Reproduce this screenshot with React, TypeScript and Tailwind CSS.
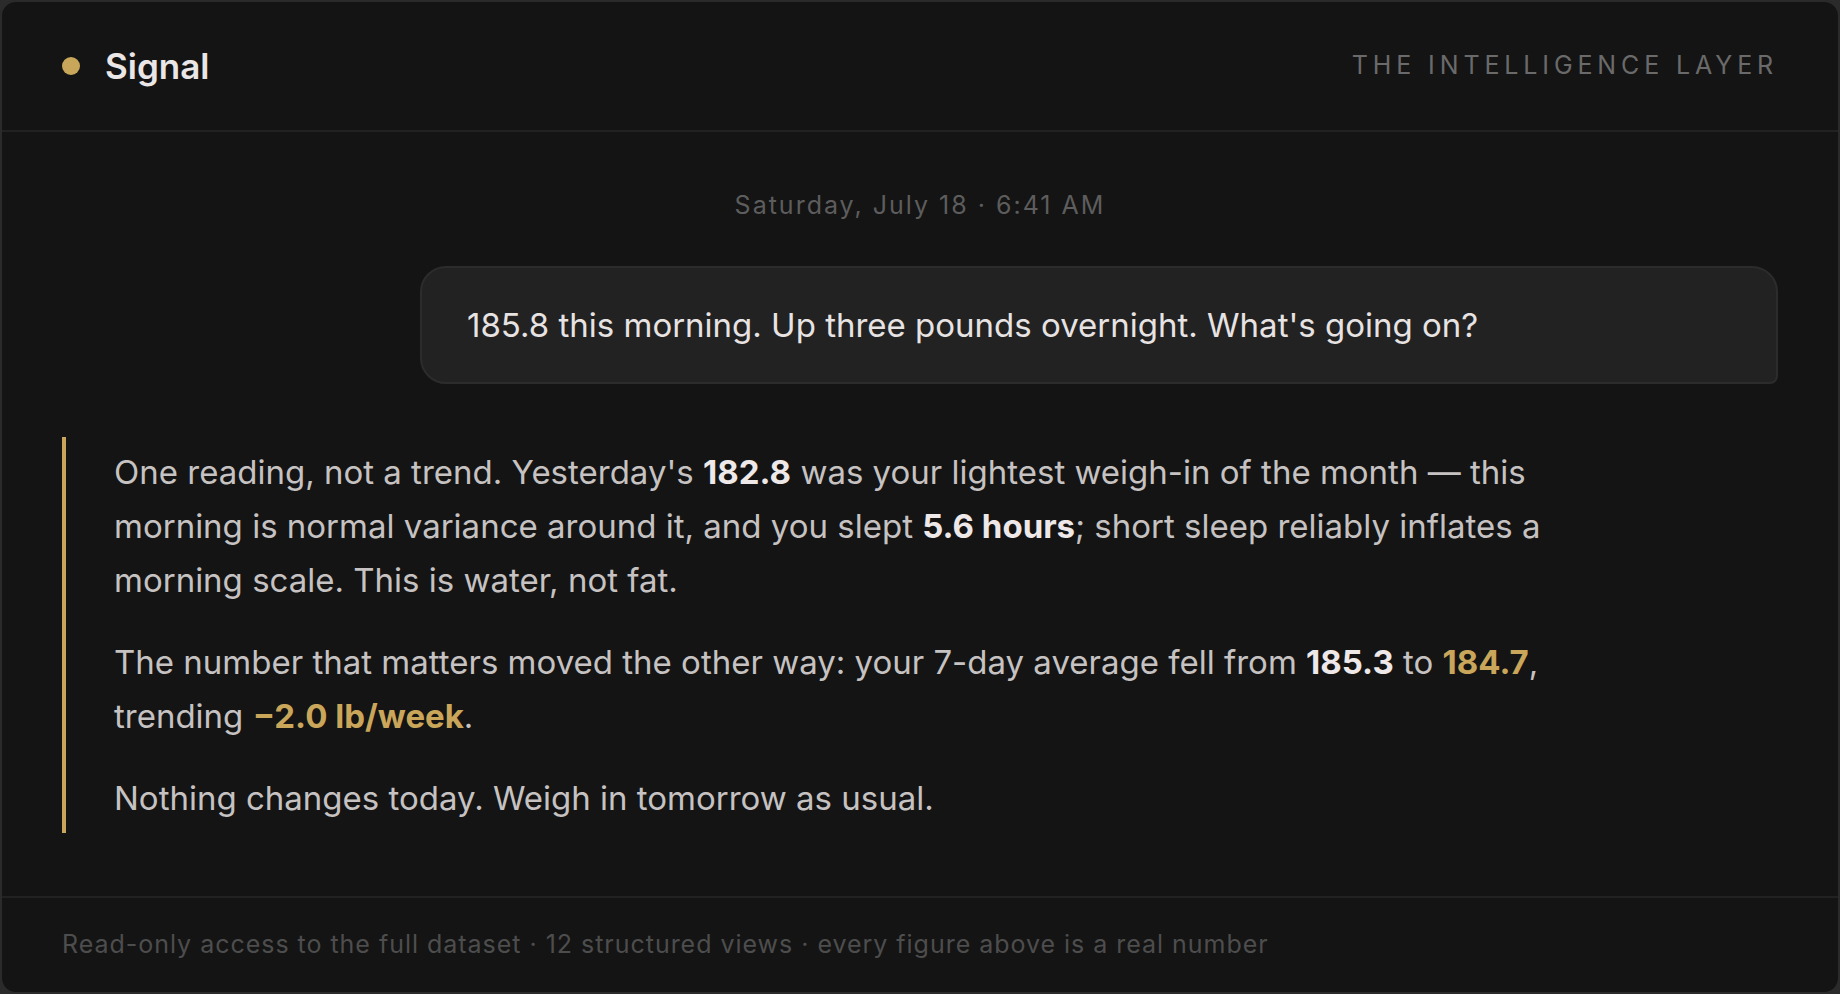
const bold = "font-bold text-[#eee8e8]";
const gold = "font-bold text-[#c9a65a]";

export default function App() {
  return (
    <div className="h-screen w-full bg-[#2b2b2b] font-['Inter',sans-serif]">
      <div className="flex h-full flex-col overflow-hidden rounded-[16px] border-2 border-[#2b2b2b] bg-[#141414]">
        {/* top bar */}
        <header className="flex h-[130px] shrink-0 items-center justify-between border-b-2 border-[#222222] px-[60px]">
          <div className="flex items-center gap-[25px]">
            <span className="h-[18px] w-[18px] rounded-full bg-[#c8a75a]" />
            <span className="text-[35px] font-semibold leading-none text-[#ebe6e6]">Signal</span>
          </div>
          <span className="text-[25px] uppercase tracking-[0.195em] text-[#6a6a6a]">
            The Intelligence Layer
          </span>
        </header>

        {/* conversation */}
        <main className="flex flex-1 flex-col px-[60px] pt-[55px]">
          <p className="text-center text-[25px] leading-[36px] tracking-[0.08em] text-[#5d5d5d]">
            Saturday, July 18 · 6:41 AM
          </p>

          <div className="mt-[43px] ml-auto w-[1358px] rounded-[26px] rounded-br-[8px] border-2 border-[#2c2c2c] bg-[#222222] px-[45px] py-[30px] text-[33px] leading-[54px] text-[#e8e3e3]">
            185.8 this morning. Up three pounds overnight. What's going on?
          </div>

          <div className="mt-[53px] flex flex-col gap-[28px] border-l-4 border-[#c8a55a] py-[8px] pl-[48px] text-[33px] leading-[54px] text-[#c6c2c2]">
            <p className="max-w-[1470px]">
              One reading, not a trend. Yesterday's <span className={bold}>182.8</span> was your
              lightest weigh-in of the month — this morning is normal variance around it, and you
              slept <span className={bold}>5.6 hours</span>; short sleep reliably inflates a morning
              scale. This is water, not fat.
            </p>
            <p className="max-w-[1470px]">
              The number that matters moved the other way: your 7-day average fell from{" "}
              <span className={bold}>185.3</span> to <span className={gold}>184.7</span>, trending{" "}
              <span className={gold}>−2.0 lb/week</span>.
            </p>
            <p className="max-w-[1470px]">Nothing changes today. Weigh in tomorrow as usual.</p>
          </div>
        </main>

        <footer className="flex h-[96px] shrink-0 items-center border-t-2 border-[#222222] px-[60px]">
          <span className="text-[25px] tracking-[0.039em] text-[#4d4d4d]">
            Read-only access to the full dataset · 12 structured views · every figure above is a real
            number
          </span>
        </footer>
      </div>
    </div>
  );
}
